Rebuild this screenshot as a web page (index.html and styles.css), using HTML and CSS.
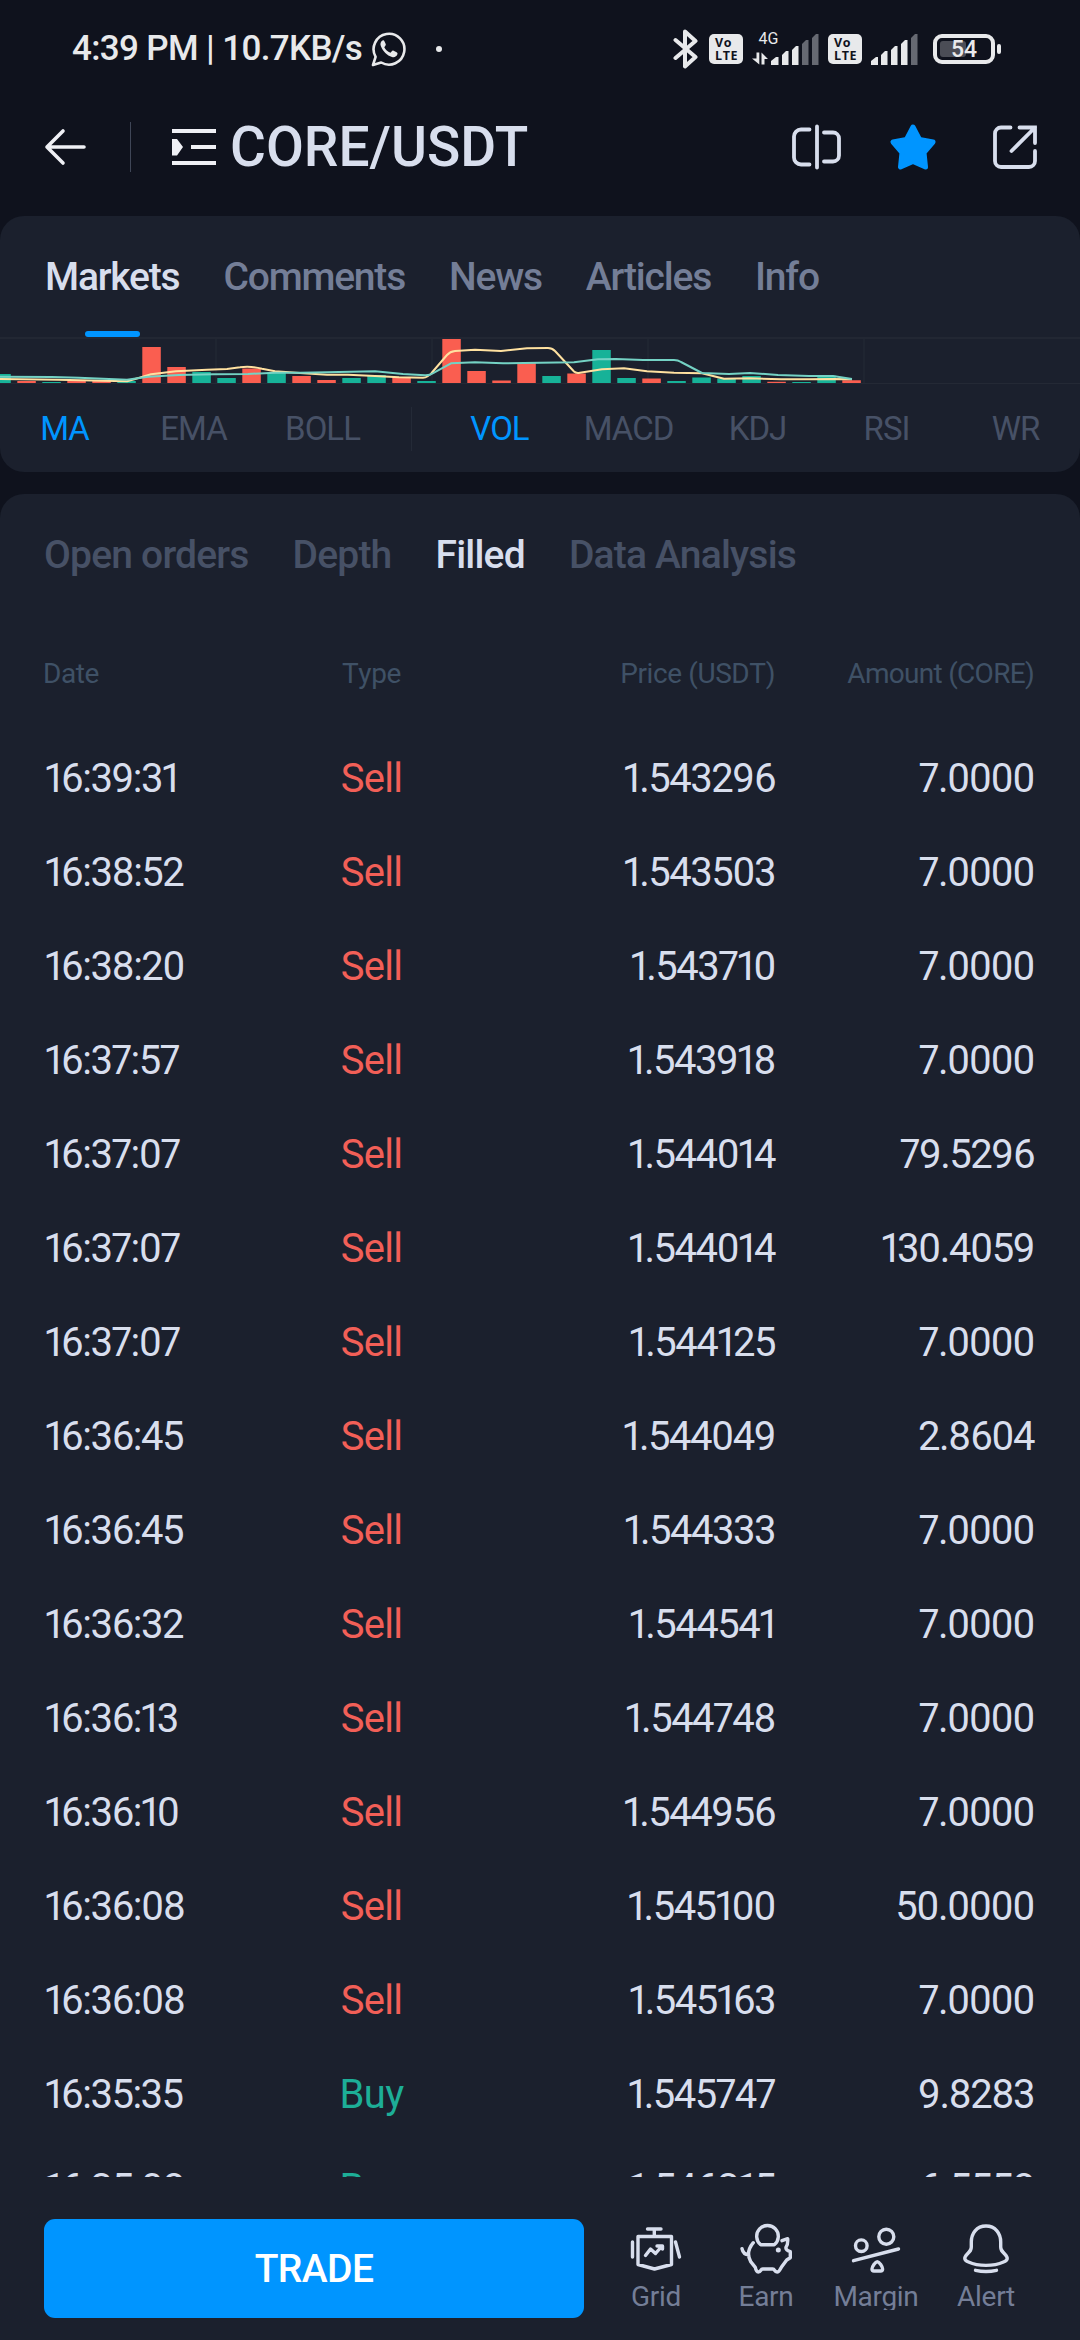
FILE: index.html
```html
<!DOCTYPE html>
<html lang="en">
<head>
<meta charset="utf-8">
<title>CORE/USDT</title>
<link rel="stylesheet" href="styles.css">
</head>
<body>

<div class="status">
  <span class="clock">4:39 PM | 10.7KB/s</span>
  <svg class="whatsapp" width="36" height="36" viewBox="0 0 36 36">
    <path d="M2 34l2.600-8.200A15.400 15.400 0 1 1 10.200 31.500z" fill="none" stroke="#e8e9eb" stroke-width="2.600" stroke-linejoin="round"/>
    <path d="M11.500 9.500c-2 1-2.600 3.500-1.500 6 2 5 6 9 11 10.500 2.500.7 4.700-.6 5.400-2.700.3-1 0-1.500-.8-2l-3-1.500c-.8-.4-1.300-.2-1.800.4l-1.300 1.600c-3-1.200-5-3.200-6.200-5.600l1.200-1.600c.4-.5.4-1 .2-1.500l-1.400-3.200c-.3-.7-1-.8-1.800-.4z" fill="#e8e9eb"/>
  </svg>
  <span class="dot"></span>

  <div class="status-right">
    <svg class="bluetooth" width="26" height="40" viewBox="0 0 26 40">
      <path d="M2.500 11l20 17-10.500 9.500V2.500L22.500 12l-20 17" fill="none" stroke="#e8e9eb" stroke-width="4" stroke-linejoin="round" stroke-linecap="round"/>
    </svg>
    <span class="volte"><b>Vo</b><b>LTE</b></span>
    <svg class="signal-4g" width="68" height="34" viewBox="0 0 68 34">
      <text x="6.500" y="12">4G</text>
      <path d="M0 26.500h4.500v-6h2.800v12zM9.500 32.500v-12l6.500 6.500h-3.500v5.500z" fill="#e8e9eb"/>
      <path d="M19 33v-4l5-4h2.500v8zM30 33V23l4-4h2.500v14zM40 33V18l4-4h2.500v19z" fill="#e8e9eb"/>
      <path d="M50 33V12l4-4h2.500v25zM60 33V6l4-4h2.500v31z" fill="#666972"/>
    </svg>
    <span class="volte"><b>Vo</b><b>LTE</b></span>
    <svg class="signal" width="50" height="34" viewBox="0 0 50 34">
      <path d="M1 33v-4l5-4h2v8zM11 33V23l4-4h2.500v14zM21 33V18l4-4h2.500v19zM31 33V12l4-4h2.500v25z" fill="#e8e9eb"/>
      <path d="M41 33V6l4-4h2.500v31z" fill="#666972"/>
    </svg>
    <span class="battery"><span class="level"></span><span class="percent">54</span></span>
    <span class="nub"></span>
  </div>
</div>

<div class="header">
  <svg class="back" width="42" height="38" viewBox="0 0 42 38">
    <path d="M19 3L3 19l16 16M3 19h37" fill="none" stroke="#eff0f5" stroke-width="3.600" stroke-linecap="round" stroke-linejoin="round"/>
  </svg>
  <span class="line"></span>
  <svg class="menu" width="44" height="36" viewBox="0 0 44 36">
    <path d="M0 0h44v4H0zM19 16h25v4H19zM0 32h44v4H0zM0 10h5l6 8-6 8.500H0z" fill="#eff0f5"/>
  </svg>
  <h1>CORE/USDT</h1>
  <div class="actions">
    <svg width="50" height="46" viewBox="0 0 50 46">
      <path d="M17.500 5.500H9a7 7 0 0 0-7 7v21a7 7 0 0 0 7 7h8.500M25 2.500v41M32 8.500h9a6 6 0 0 1 6 6v17a6 6 0 0 1-6 6h-9" fill="none" stroke="#d8deed" stroke-width="3.800" stroke-linecap="round"/>
    </svg>
    <svg class="star" width="48" height="48" viewBox="0 0 48 48">
      <path d="M24 4l6.500 12.500L44 19l-9 10.500L36.500 44l-12.500-5.500L11.500 44 13 29.500 4 19l13.500-2.500z" fill="#0095ff" stroke="#0095ff" stroke-width="5" stroke-linejoin="round"/>
    </svg>
    <svg width="46" height="46" viewBox="0 0 46 46">
      <path d="M18.500 3.500H9a6 6 0 0 0-6 6V37a6 6 0 0 0 6 6h28a6 6 0 0 0 6-6V27M27.500 3.500H43V19M43 3.500L19.500 27" fill="none" stroke="#d8deed" stroke-width="3.800" stroke-linecap="round"/>
    </svg>
  </div>
</div>

<div class="panel chart-panel">
  <div class="tabs main-tabs">
    <span class="active">Markets</span>
    <span>Comments</span>
    <span>News</span>
    <span>Articles</span>
    <span>Info</span>
  </div>
  <svg class="volume" width="1080" height="48" viewBox="0 0 1080 48">
    <path d="M0 1h1080" stroke="#222733" stroke-width="2"/>
    <path d="M216 2v44M432 2v44M648 2v44M864 2v44" stroke="#222733" stroke-width="1.500"/>
    <path d="M0 46.500h1080" stroke="#242935" stroke-width="1"/>
    <!-- falling volume -->
    <path fill="#fa5e50" d="M17.300 46v-2h18.500v2zM67.300 46v-3h18.500v3zM92.300 46v-2.500h18.500v2.500zM142.300 46v-36h18.500v36zM167.300 46v-16h18.500v16zM242.300 46v-14.500h18.500v14.500zM292.300 46v-7h18.500v7zM317.300 46v-3h18.500v3zM392.300 46v-6h18.500v6zM442.300 46v-44h18.500v44zM467.300 46v-12h18.500v12zM492.300 46v-2.500h18.500v2.500zM517.300 46v-20h18.500v20zM567.300 46v-9.500h18.500v9.500zM642.300 46v-4.500h18.500v4.500zM767.300 46v-1.300h18.500v1.300zM842.300 46v-2.700h18.500v2.700z"/>
    <!-- rising volume -->
    <path fill="#17b298" d="M0 46v-9h10.800v9zM42.300 46v-1h18.500v1zM117.300 46v-2h18.500v2zM192.300 46v-11h18.500v11zM217.300 46v-5h18.500v5zM267.300 46v-11h18.500v11zM342.300 46v-5h18.500v5zM367.300 46v-8h18.500v8zM417.300 46v-2h18.500v2zM542.300 46v-7h18.500v7zM592.300 46v-33h18.500v33zM617.300 46v-5h18.500v5zM667.300 46v-2h18.500v2zM692.300 46v-5.500h18.500v5.500zM717.300 46v-4.500h18.500v4.500zM742.300 46v-7h18.500v7zM792.300 46v-1h18.500v1zM817.300 46v-7.300h18.500v7.300z"/>
    <path class="ma" stroke="#ffe1a0" d="M0 42L58 42.700 103 43.700 127 44.300 136 41.700 151 37.300 176 34.300 207 32.700 227 32 240 30.300Q250 28.700 262 31.700L275 34.300 300 36 327 37.700 348 37.700 375 39 399 40.300 423 40.700 Q428 40.500 432 35.500L447 18 Q450 14.500 455 14L475 12.700 501 14 527 11.300 548 11 Q552 11 555 14L574 34.500 Q576 36.500 580 35.700L602 32.300 624 31.300 647 34.300 674 35.700 702 36.300 724 41.700 750 41.300 781 42.300 809 42.300 833 42 852 42.300"/>
    <path class="ma" stroke="#74d2c4" d="M0 39.700L52 40 79 40.700 127 42.700 148 39.700 179 38 213 37.300 248 37 275 35.700 300 35.700 327 35.300 375 34.300 403 37 425 38.300 Q430 38.500 434 35.700L451 26.300 475 25.300 503 26.300 540 25.700 574 25.300 598 22.300 616 22 643 23 674 23 Q678 23 681 25L702 36 729 37 750 36 778 38 809 39 833 39 852 42"/>
  </svg>
  <div class="indicators">
    <span class="on">MA</span>
    <span>EMA</span>
    <span>BOLL</span>
    <i class="sep"></i>
    <span class="on">VOL</span>
    <span>MACD</span>
    <span>KDJ</span>
    <span>RSI</span>
    <span>WR</span>
  </div>
</div>

<div class="panel trades">
  <div class="tabs sub-tabs">
    <span>Open orders</span>
    <span>Depth</span>
    <span class="active">Filled</span>
    <span>Data Analysis</span>
  </div>
  <div class="row head"><span>Date</span><span>Type</span><span>Price (USDT)</span><span>Amount (CORE)</span></div>
  <div class="row"><span>16:39:31</span><span class="sell">Sell</span><span>1.543296</span><span>7.0000</span></div>
  <div class="row"><span>16:38:52</span><span class="sell">Sell</span><span>1.543503</span><span>7.0000</span></div>
  <div class="row"><span>16:38:20</span><span class="sell">Sell</span><span>1.543710</span><span>7.0000</span></div>
  <div class="row"><span>16:37:57</span><span class="sell">Sell</span><span>1.543918</span><span>7.0000</span></div>
  <div class="row"><span>16:37:07</span><span class="sell">Sell</span><span>1.544014</span><span>79.5296</span></div>
  <div class="row"><span>16:37:07</span><span class="sell">Sell</span><span>1.544014</span><span>130.4059</span></div>
  <div class="row"><span>16:37:07</span><span class="sell">Sell</span><span>1.544125</span><span>7.0000</span></div>
  <div class="row"><span>16:36:45</span><span class="sell">Sell</span><span>1.544049</span><span>2.8604</span></div>
  <div class="row"><span>16:36:45</span><span class="sell">Sell</span><span>1.544333</span><span>7.0000</span></div>
  <div class="row"><span>16:36:32</span><span class="sell">Sell</span><span>1.544541</span><span>7.0000</span></div>
  <div class="row"><span>16:36:13</span><span class="sell">Sell</span><span>1.544748</span><span>7.0000</span></div>
  <div class="row"><span>16:36:10</span><span class="sell">Sell</span><span>1.544956</span><span>7.0000</span></div>
  <div class="row"><span>16:36:08</span><span class="sell">Sell</span><span>1.545100</span><span>50.0000</span></div>
  <div class="row"><span>16:36:08</span><span class="sell">Sell</span><span>1.545163</span><span>7.0000</span></div>
  <div class="row"><span>16:35:35</span><span class="buy">Buy</span><span>1.545747</span><span>9.8283</span></div>
  <div class="row"><span>16:35:08</span><span class="buy">Buy</span><span>1.546315</span><span>6.5558</span></div>
</div>

<div class="footer">
  <button class="trade">TRADE</button>
  <div class="tool">
    <svg width="60" height="52" viewBox="0 0 60 52">
      <path d="M21.500 6H35M28.300 6v7M12 13.500h33.500v28L28.500 46 12 41.500zM6.500 19v15M49.500 19l4 15M19.500 32.500l5-6.500 5 4.500 6.500-7.500M31 23h5.500v3"/>
    </svg>
    <span>Grid</span>
  </div>
  <div class="tool">
    <svg width="60" height="52" viewBox="0 0 60 52">
      <path d="M24.700 21.700a10.800 10.800 0 1 1 13.600 0zM17.300 19.700c-5 6-6 13-2.600 19l4.600 5.600c.5 3 1 4.700 3 4.700 3 0 2-3 4.400-3h10c2.400 0 1.400 3 4.400 3 2.500 0 2.600-2.500 4.600-5.300l5-6.700 3.600-2.300v-6c-3-1-5-2-4.300-4.400 2-3 2-5 1.700-8.600L46 17.700M12.700 31.700c-4 0-6-2.500-6.700-6"/>
      <circle class="eye" cx="42.300" cy="27" r="2.500"/>
    </svg>
    <span>Earn</span>
  </div>
  <div class="tool">
    <svg width="60" height="52" viewBox="0 0 60 52">
      <circle cx="15.300" cy="22.700" r="5.800"/>
      <circle cx="40.300" cy="13.700" r="7.500"/>
      <path d="M7.500 37.700L52.500 26M31.300 38.700c-2 0-5.300 5-5.300 7.300 0 1.500.8 2 2 2h6.600c1.200 0 2-.5 2-2 0-2.300-3.300-7.300-5.300-7.300z"/>
    </svg>
    <span>Margin</span>
  </div>
  <div class="tool">
    <svg width="60" height="52" viewBox="0 0 60 52">
      <path d="M30 3C20.500 3 15.300 10.500 15.300 19v5c0 3-1 4-4 7-4 4-3 6.500 1.200 8 10 4.500 25 4.500 35 0 4.200-1.500 5.200-4 1.200-8-3-3-4-4-4-7v-5C44.700 10.500 39.500 3 30 3zM19.500 47.300c6 1.300 15 1.300 21 0"/>
    </svg>
    <span>Alert</span>
  </div>
</div>

</body>
</html>
```
FILE: styles.css
```css
* {
  box-sizing: border-box;
}

body {
  margin: 0;
  width: 1080px;
  height: 2340px;
  overflow: hidden;
  background: #0f121d;
  color: #d8deed;
  font-family: Roboto, "Liberation Sans", sans-serif;
  font-variant-numeric: proportional-nums;
}

svg {
  display: block;
  flex: none;
}

/* status bar */
.status {
  display: flex;
  align-items: center;
  height: 97px;
  padding: 0 79px 0 72px;
  color: #e8e9eb;
}

.clock {
  width: 299px;
  font-size: 35px;
  font-weight: 500;
  letter-spacing: -0.65px;
  white-space: nowrap;
  font-variant-numeric: normal;
}

.dot {
  width: 6px;
  height: 6px;
  margin-left: 29px;
  border-radius: 50%;
  background: #e8e9eb;
}

.status-right {
  display: flex;
  align-items: center;
  margin-left: auto;
}

.volte {
  width: 34px;
  height: 30px;
  margin-left: 10px;
  padding: 2px 0 0 6px;
  border-radius: 5px;
  background: #e8e9eb;
  color: #0f121d;
}

.volte b {
  display: block;
  font: 700 12.5px/13px "Open Sans", sans-serif;
  letter-spacing: 0.6px;
}

.signal-4g {
  margin-left: 9px;
}

.signal-4g text {
  font-size: 16px;
  fill: #e8e9eb;
}

.signal-4g + .volte {
  margin-left: 8px;
}

.signal {
  margin-left: 8px;
}

.battery {
  position: relative;
  width: 62px;
  height: 30px;
  margin-left: 13px;
  border: 4px solid #e8e9eb;
  border-radius: 9px;
}

.level {
  position: absolute;
  left: 3px;
  top: 3px;
  width: 26px;
  height: 16px;
  border-radius: 3px;
  background: #4b4d56;
}

.percent {
  position: absolute;
  inset: 0;
  font-size: 23px;
  font-weight: 500;
  line-height: 24px;
  text-align: center;
}

.nub {
  width: 4px;
  height: 10px;
  margin-left: 2px;
  border-radius: 2px;
  background: #e8e9eb;
}

/* header */
.header {
  display: flex;
  align-items: center;
  height: 99px;
  margin-bottom: 20px;
  padding: 0 42px 0 44px;
}

.header .line {
  width: 1px;
  height: 50px;
  margin: 0 41px 0 44px;
  background: #3f4657;
}

.header h1 {
  margin: 0 0 0 14px;
  font-size: 55px;
  font-weight: 500;
  line-height: 98px;
}

.actions {
  display: flex;
  align-items: center;
  margin-left: auto;
}

.actions .star {
  margin: 0 55px 0 47px;
}

/* panels */
.panel {
  border-radius: 24px;
  background: #1b202d;
}

.chart-panel {
  height: 256px;
  margin-bottom: 22px;
}

.tabs {
  display: flex;
  padding: 1px 0 0 44px;
  font-size: 39px;
  font-weight: 500;
  line-height: 121px;
  white-space: nowrap;
}

.main-tabs {
  gap: 44px;
  height: 121px;
  padding-left: 45px;
  letter-spacing: -1.2px;
  color: #747e97;
}

.main-tabs .active {
  position: relative;
}

.main-tabs .active::after {
  content: "";
  position: absolute;
  left: 40px;
  bottom: 0;
  width: 55px;
  height: 6px;
  border-radius: 3px;
  background: #0095ff;
}

.tabs .active {
  color: #d8deed;
}

.ma {
  fill: none;
  stroke-width: 2;
  stroke-linejoin: round;
}

.indicators {
  display: grid;
  grid-template-columns: repeat(3, 129px) 48px repeat(5, 129px);
  align-items: center;
  height: 87px;
  color: #475166;
  font-size: 33px;
  letter-spacing: -1px;
  text-align: center;
}

.indicators .on {
  color: #0095ff;
}

.indicators .sep {
  justify-self: center;
  width: 1px;
  height: 44px;
  background: #242a37;
}

/* filled trades */
.trades {
  height: 1683px;
  overflow: hidden;
  border-radius: 24px 24px 0 0;
}

.sub-tabs {
  gap: 44px;
  height: 122px;
  letter-spacing: -0.8px;
  color: #475166;
}

.row {
  display: grid;
  grid-template-columns: 236px 181px 313px 259px;
  padding-left: 45px;
  font-size: 40px;
  font-kerning: none;
  letter-spacing: -1.5px;
  line-height: 94px;
}

.row span:nth-child(2) {
  letter-spacing: -0.7px;
  text-align: center;
}

.row span:nth-child(n+3) {
  text-align: right;
}

.head,
.head span:nth-child(2) {
  letter-spacing: -0.4px;
}

.head {
  grid-template-columns: 238px 181px 313px 259px;
  padding-left: 43px;
  color: #3f5166;
  font-size: 28px;
  line-height: 116px;
}

.head span:last-child {
  letter-spacing: -0.7px;
}

.sell {
  color: #f25f57;
}

.buy {
  color: #1dae97;
}

/* bottom bar */
.footer {
  display: flex;
  height: 163px;
  padding: 42px 0 0 44px;
  background: #1b202d;
}

.trade {
  width: 540px;
  height: 99px;
  margin-right: 17px;
  padding: 1px 0 0;
  border: 0;
  border-radius: 11px;
  background: #0095ff;
  color: #fff;
  font: 500 39px Roboto, sans-serif;
  letter-spacing: -0.6px;
}

.tool {
  display: flex;
  flex-direction: column;
  align-items: center;
  width: 110px;
  padding-top: 4px;
  color: #747e97;
  font-size: 28px;
  letter-spacing: -0.3px;
  line-height: 30px;
}

.tool span {
  height: 28px;
  margin-top: 7px;
  overflow: hidden;
}

.tool svg {
  fill: none;
  stroke: #d8deed;
  stroke-width: 3.4;
  stroke-linecap: round;
  stroke-linejoin: round;
}

.tool .eye {
  fill: #d8deed;
  stroke: none;
}
```
